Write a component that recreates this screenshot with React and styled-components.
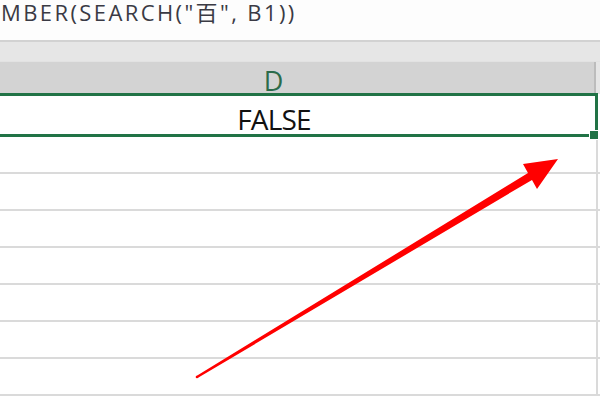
import React from 'react'
import styled, {createGlobalStyle} from 'styled-components'

const GlobalStyle = createGlobalStyle`
  html, body {
    margin: 0;
    padding: 0;
    background: #ffffff;
    overflow: hidden;
  }
  body {
    font-family: "Open Sans", "Noto Sans CJK SC", sans-serif;
  }
`

const rows = [0, 1, 2, 3, 4, 5, 6]

function App() {
  return (
    <Page>
      <GlobalStyle />
      <FormulaBar>
        <FormulaText>MBER(SEARCH("百", B1))</FormulaText>
      </FormulaBar>
      <Gap />
      <Sheet>
        <HeaderRow>
          <HeaderCell $selected>D</HeaderCell>
          <HeaderCell />
        </HeaderRow>
        <Row $auto>
          <SelectedCell>
            <Value>FALSE</Value>
            <FillHandle />
          </SelectedCell>
        </Row>
        {rows.map((r) => (
          <Row key={r}>
            <Cell />
            <Cell $rest />
          </Row>
        ))}
      </Sheet>
      <Arrow viewBox="0 0 600 400" width="600" height="400">
        <polygon
          fill="#ff0000"
          points="196.4,376 528,173.1 523,164 558,159 537,189 532,179.9 197.6,378"
        />
        <circle cx="197" cy="377" r="1.3" fill="#ff0000" />
      </Arrow>
    </Page>
  )
}

export default App

const Page = styled.div`
  position: relative;
  width: 600px;
  height: 400px;
  overflow: hidden;
  background: #ffffff;
`

const FormulaBar = styled.div`
  height: 40px;
  background: #fdfdfd;
  border-bottom: 2px solid #d2d2d2;
  display: flex;
  align-items: flex-start;
`

const FormulaText = styled.span`
  display: block;
  margin-left: 1px;
  font-size: 22px;
  line-height: 24px;
  letter-spacing: 2.4px;
  color: #3a3a44;
  white-space: nowrap;
`

const Gap = styled.div`
  height: 19px;
  background: #e6e6e6;
`

const Sheet = styled.div`
  margin-left: -47px;
  display: flex;
  flex-direction: column;
`

const HeaderRow = styled.div`
  display: flex;
  height: 32px;
  border-top: 1px solid #e2e2e2;
  box-sizing: border-box;
`

const HeaderCell = styled.div`
  width: ${(p) => (p.$selected ? '643px' : '60px')};
  flex-shrink: 0;
  height: 32px;
  box-sizing: border-box;
  background: ${(p) => (p.$selected ? '#d3d3d3' : '#e6e6e6')};
  border-right: ${(p) => (p.$selected ? '2px solid #bcbcbc' : 'none')};
  padding-top: 6px;
  text-align: center;
  font-size: 27px;
  line-height: 25px;
  color: #2b6b4a;
`

const Row = styled.div`
  display: flex;
  height: ${(p) => (p.$auto ? 'auto' : '37px')};
  flex-shrink: 0;
`

const SelectedCell = styled.div`
  position: relative;
  width: 642px;
  height: 38px;
  flex-shrink: 0;
  border-top: 3px solid #217346;
  border-right: 3px solid #217346;
  border-bottom: 3px solid #217346;
  text-align: center;
`

const Value = styled.span`
  display: block;
  padding-top: 8px;
  font-size: 28px;
  line-height: 30px;
  letter-spacing: -0.8px;
  color: #111111;
`

const FillHandle = styled.div`
  position: absolute;
  right: -4px;
  bottom: -6px;
  width: 8px;
  height: 8px;
  background: #217346;
  border: 1px solid #ffffff;
`

const Cell = styled.div`
  width: ${(p) => (p.$rest ? '60px' : '643px')};
  flex-shrink: 0;
  height: 35px;
  border-right: ${(p) => (p.$rest ? 'none' : '2px solid #dadada')};
  border-bottom: 2px solid #dadada;
`

const Arrow = styled.svg`
  position: absolute;
  left: 0;
  top: 0;
  pointer-events: none;
`
